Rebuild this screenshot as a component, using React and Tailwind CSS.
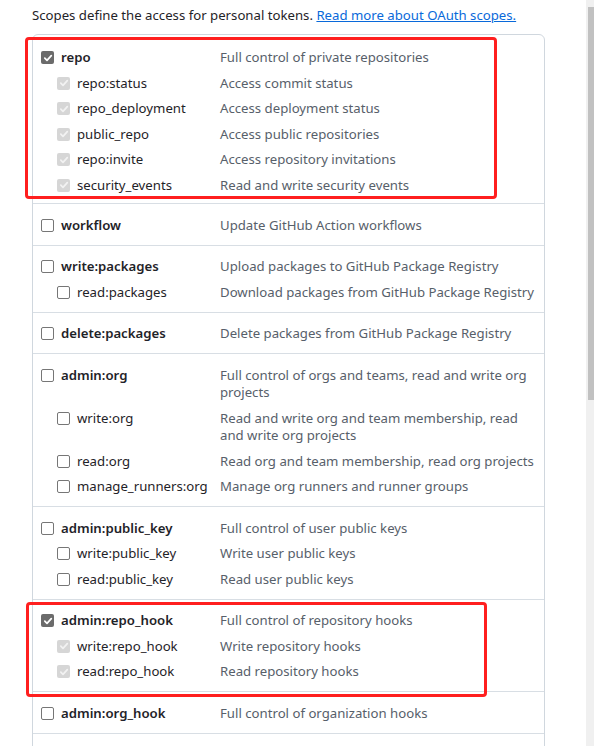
import React from "react";

const groups = [
  [
    ["repo", "Full control of private repositories", 0, "on"],
    ["repo:status", "Access commit status", 1, "sub"],
    ["repo_deployment", "Access deployment status", 1, "sub"],
    ["public_repo", "Access public repositories", 1, "sub"],
    ["repo:invite", "Access repository invitations", 1, "sub"],
    ["security_events", "Read and write security events", 1, "sub"],
  ],
  [["workflow", "Update GitHub Action workflows", 0, "off"]],
  [
    ["write:packages", "Upload packages to GitHub Package Registry", 0, "off"],
    ["read:packages", "Download packages from GitHub Package Registry", 1, "off"],
  ],
  [["delete:packages", "Delete packages from GitHub Package Registry", 0, "off"]],
  [
    ["admin:org", "Full control of orgs and teams, read and write org projects", 0, "off"],
    ["write:org", "Read and write org and team membership, read and write org projects", 1, "off"],
    ["read:org", "Read org and team membership, read org projects", 1, "off"],
    ["manage_runners:org", "Manage org runners and runner groups", 1, "off"],
  ],
  [
    ["admin:public_key", "Full control of user public keys", 0, "off"],
    ["write:public_key", "Write user public keys", 1, "off"],
    ["read:public_key", "Read user public keys", 1, "off"],
  ],
  [
    ["admin:repo_hook", "Full control of repository hooks", 0, "on"],
    ["write:repo_hook", "Write repository hooks", 1, "sub"],
    ["read:repo_hook", "Read repository hooks", 1, "sub"],
  ],
  [["admin:org_hook", "Full control of organization hooks", 0, "off"]],
];

function Box({ state }) {
  if (state === "off") {
    return <span className="block h-[13px] w-[13px] shrink-0 rounded-[2px] border border-[#767676] bg-white" />;
  }
  const on = state === "on";
  return (
    <span
      className={`flex h-[13px] w-[13px] shrink-0 items-center justify-center rounded-[2px] ${
        on ? "bg-[#6b6b6b]" : "bg-[#d6d6d6]"
      }`}
    >
      <svg width="10" height="10" viewBox="0 0 10 10">
        <path
          d="M1.8 5.2 L4 7.4 L8.3 2.6"
          fill="none"
          stroke={on ? "#ffffff" : "#f2f2f2"}
          strokeWidth="1.7"
          strokeLinecap="round"
          strokeLinejoin="round"
        />
      </svg>
    </span>
  );
}

export default function App() {
  return (
    <div
      className="flex h-[746px] overflow-hidden bg-white text-[13.2px] text-[#1f2328]"
      style={{ fontFamily: '"Noto Sans", "Open Sans", sans-serif' }}
    >
      <div className="relative flex-1">
        <p className="pl-[32px] pt-[5px] leading-[21px]">
          Scopes define the access for personal tokens.{" "}
          <a className="text-[#0969da] underline">Read more about OAuth scopes.</a>
        </p>

        <div className="ml-[32px] mt-[8px] w-[513px] rounded-md border border-[#d0d7de]">
          {groups.map((rows, gi) => (
            <div
              key={gi}
              className={gi === 0 ? "pb-[6px] pt-[9px]" : "border-t border-[#d8dee4] py-[7.5px]"}
            >
              {rows.map(([name, desc, level, state]) => (
                <div key={name} className="flex pb-[3px] pl-[8px] pr-[8px] pt-[5px] leading-[17.5px]">
                  <div className={`flex w-[179px] shrink-0 items-start gap-[7px] ${level ? "pl-[16px]" : ""}`}>
                    <span className="flex h-[17.5px] items-center">
                      <Box state={state} />
                    </span>
                    <span className={level ? "" : "font-semibold"}>{name}</span>
                  </div>
                  <div className="flex-1 text-[#57606a]">{desc}</div>
                </div>
              ))}
            </div>
          ))}
          {/* next group continues below the fold */}
          <div className="h-[40px] border-t border-[#d8dee4]" />
        </div>

        <div className="absolute left-[25px] top-[37px] h-[162px] w-[472px] rounded-[4px] border-[3px] border-[#ff1f1f]" />
        <div className="absolute left-[26px] top-[602px] h-[95px] w-[461px] rounded-[4px] border-[3px] border-[#ff1f1f]" />
      </div>

      <div className="w-[8px] shrink-0 bg-[#f0f0f0] pl-[2px] pt-[7px]">
        <div className="h-[393px] bg-[#c1c1c1]" />
      </div>
    </div>
  );
}
